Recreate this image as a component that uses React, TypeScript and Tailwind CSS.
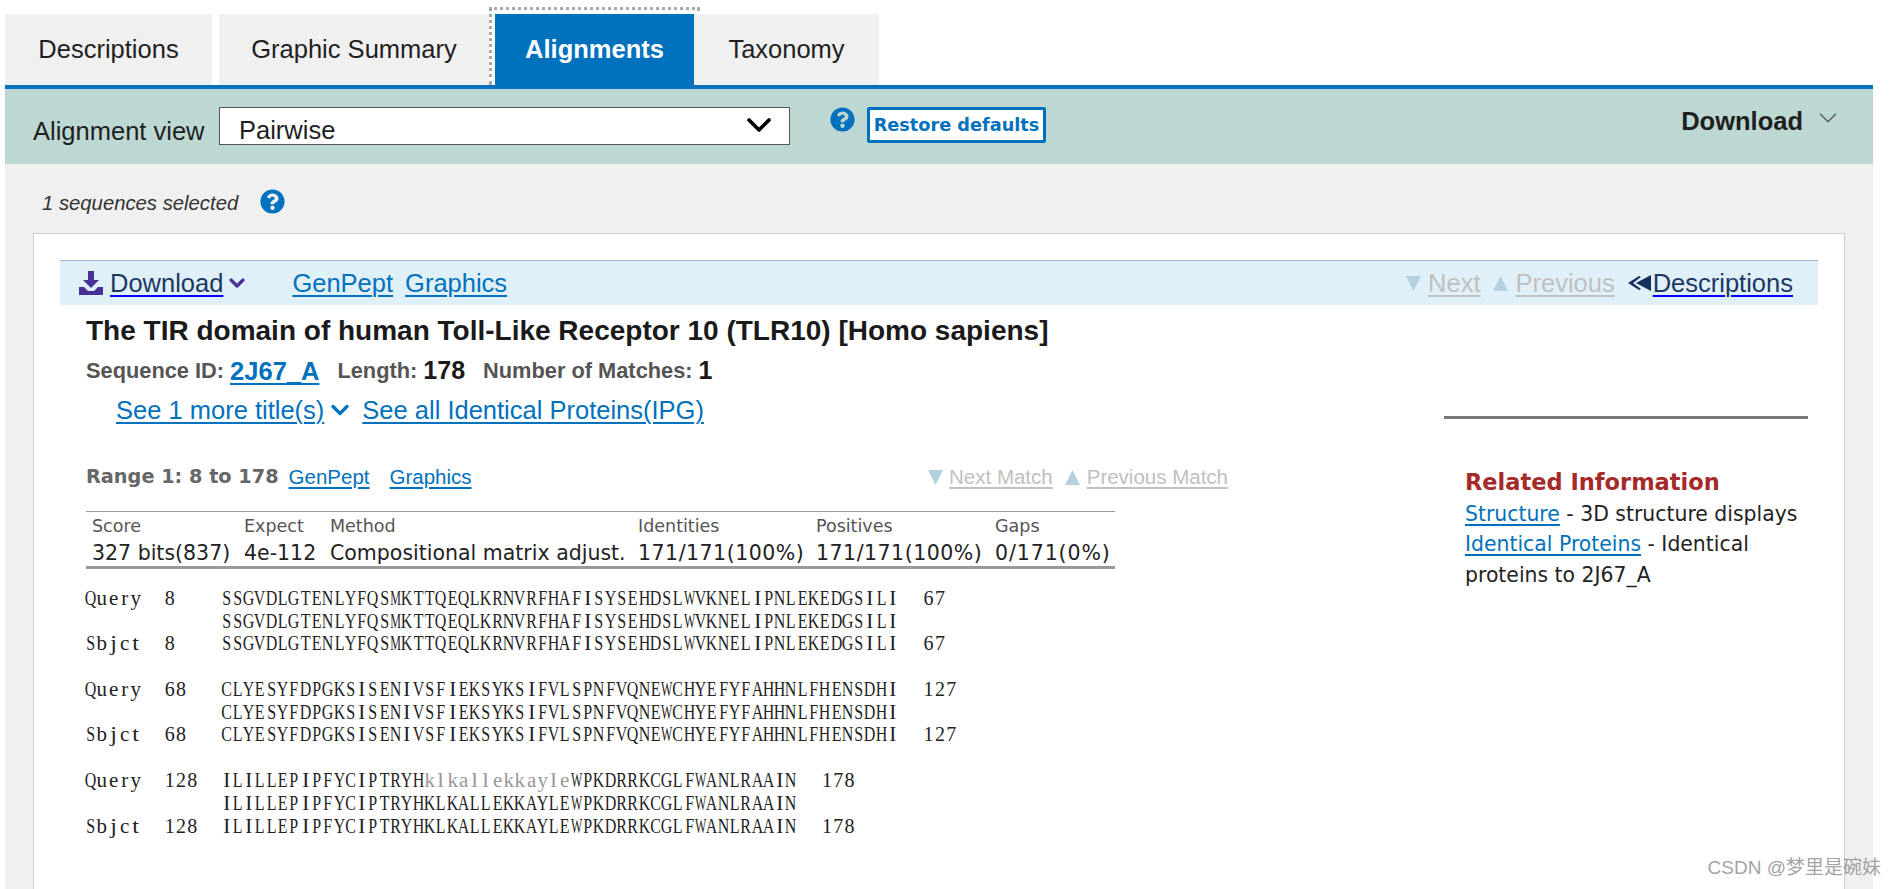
import React from 'react';
import { ChevronDown } from 'lucide-react';
import { FaQuestionCircle } from 'react-icons/fa';

const seqBlocks = [
  { start: '8', end: '67', parts: [['SSGVDLGTENLYFQSMKTTQEQLKRNVRFHAFISYSEHDSLWVKNELIPNLEKEDGSILI', false]] },
  { start: '68', end: '127', parts: [['CLYESYFDPGKSISENIVSFIEKSYKSIFVLSPNFVQNEWCHYEFYFAHHNLFHENSDHI', false]] },
  {
    start: '128',
    end: '178',
    parts: [
      ['ILILLEPIPFYCIPTRYH', false],
      ['klkallekkayle', true],
      ['WPKDRRKCGLFWANLRAAIN', false],
    ],
  },
] as { start: string; end: string; parts: [string, boolean][] }[];

// squeeze or stretch by letter so every glyph fills its cell
const cellScale = (c: string) => {
  if (c === 'M' || c === 'W') return 'scale-x-[0.6]';
  if (c === 'I' || c === 'J') return 'scale-x-[1.05]';
  if (c === 'i' || c === 'j' || c === 'l' || c === 't') return 'scale-x-[1.2]';
  if (c >= 'A' && c <= 'Z') return 'scale-x-[0.8]';
  if (c >= 'a' && c <= 'z') return 'scale-x-[1.05]';
  return 'scale-x-100';
};

// fixed pitch cell, the reference font is a narrow monospaced serif
const Mono: React.FC<{ text: string; masked?: boolean }> = ({ text, masked }) => (
  <>
    {text.split('').map((c, i) => (
      <span
        key={i}
        className={`inline-flex w-[11.3px] justify-center ${cellScale(c)} ${masked ? 'text-[#999999]' : 'text-[#222222]'}`}
      >
        {c === ' ' ? '\u00a0' : c}
      </span>
    ))}
  </>
);

const SeqRow: React.FC<{ label: string; start: string; end: string; parts: [string, boolean][]; plain?: boolean }> = ({
  label,
  start,
  end,
  parts,
  plain,
}) => (
  <div className="h-[22.7px] whitespace-nowrap">
    <Mono text={label.padEnd(7, ' ')} />
    <Mono text={start.padEnd(5, ' ')} />
    {parts.map(([t, m], i) => (
      <Mono key={i} text={plain ? t.toUpperCase() : t} masked={!plain && m} />
    ))}
    <span className="ml-[2px]">
      <Mono text={'  ' + end} />
    </span>
  </div>
);

const TriDown = () => (
  <svg width="15" height="17" viewBox="0 0 15 17" className="shrink-0">
    <polygon points="0,1 15,1 7.5,16" fill="#b5d0de" />
  </svg>
);

const TriUp = () => (
  <svg width="15" height="17" viewBox="0 0 15 17" className="shrink-0">
    <polygon points="7.5,1 15,16 0,16" fill="#b5d0de" />
  </svg>
);

const Help = () => <FaQuestionCircle className="h-[25px] w-[25px] text-[#0071bc]" />;

const linkCls = 'text-[#0071bc] underline decoration-2 underline-offset-[3px]';
const navyCls = 'text-[#1c3764] underline decoration-[#0000ff] decoration-2 underline-offset-[3px]';
const greyCls = 'text-[#c0c0c0] underline decoration-2 underline-offset-[3px]';
const verdana = "font-['DejaVu_Sans',sans-serif]";

const stats = [
  ['Score', '327 bits(837)', ''],
  ['Expect', '4e-112', ''],
  ['Method', 'Compositional matrix adjust.', ''],
  ['Identities', '171/171(100%)', 'tracking-[0.5px]'],
  ['Positives', '171/171(100%)', 'tracking-[0.5px]'],
  ['Gaps', '0/171(0%)', 'tracking-[0.9px]'],
];

export default function App() {
  return (
    <div className="relative h-[889px] overflow-hidden bg-white pl-[5px] pr-[23px] pt-[7px] font-['Liberation_Sans',Arial,sans-serif] text-[25.5px] text-[#1f1f1f]">
      {/* tabs */}
      <div className="flex h-[78px] items-end">
        <div className="flex h-[71px] w-[207px] items-center justify-center bg-[#f0f0f0]">Descriptions</div>
        <div className="ml-[7px] flex h-[71px] w-[270px] items-center justify-center bg-[#f0f0f0]">Graphic Summary</div>
        <div className="h-[78px] w-[211px] border-3 border-b-0 border-dotted border-[#aaaaaa] pl-[3px] pr-[3px] pt-[4px]">
          <div className="flex h-[71px] w-[199px] items-center justify-center bg-[#0071bc] font-bold text-white">Alignments</div>
        </div>
        <div className="relative -ml-[6px] flex h-[71px] w-[185px] items-center justify-center bg-[#f0f0f0]">Taxonomy</div>
      </div>

      {/* toolbar */}
      <div className="flex h-[79px] items-start border-t-4 border-[#0071bc] bg-[#bdd7d3] pl-[28px] pr-[30px] pt-[18px]">
        <div className="flex h-[48px] w-[186px] items-center">Alignment view</div>
        <div className="flex h-[38px] w-[571px] items-center justify-between border border-[#555555] bg-white pl-[19px] pr-[10px] pt-[9px]">
          <span>Pairwise</span>
          <ChevronDown className="h-[40px] w-[40px] -translate-y-[6px] text-black" strokeWidth={2.2} />
        </div>
        <div className="ml-[40px] mr-[12px]">
          <Help />
        </div>
        <div className={`flex h-[36px] w-[179px] items-center justify-center rounded-[2px] border-3 border-[#0071bc] bg-white text-[17.7px] font-bold text-[#0071bc] ${verdana}`}>
          Restore defaults
        </div>
        <div className="ml-auto flex h-[28px] items-center font-bold">
          Download
          <ChevronDown className="ml-[10px] h-[30px] w-[30px] -translate-y-[3px] text-[#555555]" strokeWidth={1} />
        </div>
      </div>

      {/* selected */}
      <div className="bg-[#f0f0f0] px-[28px]">
        <div className="flex h-[69px] items-start pt-[24px]">
          <span className="ml-[9px] flex h-[30px] items-center text-[20.3px] italic text-[#333333]">1 sequences selected</span>
          <span className="ml-[22px] mt-[1px]">
            <Help />
          </span>
        </div>

        {/* result card */}
        <div className="h-[700px] border border-[#cccccc] bg-white px-[26px] pt-[26px]">
          <div className="flex h-[45px] items-center justify-between border-t border-[#9db4cf] bg-[#e0f0f8] pl-[19px] pr-[25px]">
            <div className="flex items-center">
              <svg width="24" height="24" viewBox="0 0 24 24" className="shrink-0 text-[#4a2f96]" fill="currentColor">
                <path d="M9 0h6v9h5l-8 8-8-8h5z" />
                <path d="M0 16h5l4 4h6l4-4h5v8H0z" />
              </svg>
              <span className={`ml-[7px] ${navyCls}`}>Download</span>
              <ChevronDown className="ml-[2px] h-[24px] w-[24px] text-[#4a2f96]" strokeWidth={3.2} />
              <span className={`ml-[43px] ${linkCls}`}>GenPept</span>
              <span className={`ml-[12px] ${linkCls}`}>Graphics</span>
            </div>
            <div className="flex items-center">
              <TriDown />
              <span className={`ml-[7px] ${greyCls}`}>Next</span>
              <span className="ml-[13px]">
                <TriUp />
              </span>
              <span className={`ml-[7px] ${greyCls}`}>Previous</span>
              <svg width="23" height="16" viewBox="0 0 23 16" className="ml-[13px] mr-[2px] shrink-0">
                <polygon points="0,8 11,1 13,2 5,8 13,14 11,15" fill="#14305f" />
                <polygon points="8,8 23,0 23,16" fill="#14305f" />
              </svg>
              <span className={navyCls}>Descriptions</span>
            </div>
          </div>

          <div className="pl-[26px]">
            <h1 className="mt-[11px] h-[30px] text-[28px] font-bold leading-[30px] text-[#1a1a1a]">
              The TIR domain of human Toll-Like Receptor 10 (TLR10) [Homo sapiens]
            </h1>

            <div className="flex">
              <div className="min-w-0 flex-1">
                <div className="mt-[10px] flex h-[30px] items-center whitespace-nowrap text-[21.8px] font-bold text-[#555555]">
                  Sequence ID:
                  <span className={`ml-[6px] text-[25.5px] ${linkCls}`}>2J67_A</span>
                  <span className="ml-[18px]">Length:</span>
                  <span className="ml-[6px] text-[25px] text-[#1a1a1a]">178</span>
                  <span className="ml-[18px]">Number of Matches:</span>
                  <span className="ml-[6px] text-[25px] text-[#1a1a1a]">1</span>
                </div>

                <div className="mt-[9px] flex h-[30px] items-center pl-[30px] whitespace-nowrap">
                  <span className={linkCls}>See 1 more title(s)</span>
                  <ChevronDown className="ml-[2px] h-[28px] w-[28px] text-[#0071bc]" strokeWidth={2.8} />
                  <span className={`ml-[8px] ${linkCls}`}>See all Identical Proteins(IPG)</span>
                </div>

                <div className="mt-[37px] flex h-[30px] w-[1142px] items-center justify-between text-[20.5px]">
                  <div className="flex items-center">
                    <span className={`font-bold text-[#666666] ${verdana} text-[19.3px]`}>Range 1: 8 to 178</span>
                    <span className={`ml-[10px] ${linkCls}`}>GenPept</span>
                    <span className={`ml-[20px] ${linkCls}`}>Graphics</span>
                  </div>
                  <div className="flex items-center">
                    <TriDown />
                    <span className={`ml-[6px] ${greyCls}`}>Next Match</span>
                    <span className="ml-[12px]">
                      <TriUp />
                    </span>
                    <span className={`ml-[7px] ${greyCls}`}>Previous Match</span>
                  </div>
                </div>

                <div className={`mt-[19px] grid h-[58px] w-[1029px] grid-cols-[152px_86px_308px_178px_179px_120px] border-t border-b-3 border-[#999999] pl-[6px] pt-[1px] ${verdana}`}>
                  {stats.map(([head]) => (
                    <div key={head} className="h-[27px] text-[17.5px] leading-[27px] text-[#555555]">
                      {head}
                    </div>
                  ))}
                  {stats.map(([head, value, extra]) => (
                    <div key={head} className={`h-[27px] whitespace-nowrap text-[20.5px] leading-[27px] text-[#222222] ${extra}`}>
                      {value}
                    </div>
                  ))}
                </div>

                <div className="-ml-[1px] mt-[18px] font-['Liberation_Serif',serif] text-[20px] leading-[22.7px]">
                  {seqBlocks.map((b) => (
                    <div key={b.start} className="mb-[23px]">
                      <SeqRow label="Query" start={b.start} end={b.end} parts={b.parts} />
                      <SeqRow label="" start="" end="" parts={b.parts} plain />
                      <SeqRow label="Sbjct" start={b.start} end={b.end} parts={b.parts} plain />
                    </div>
                  ))}
                </div>
              </div>

              {/* related information */}
              <aside className="mr-[10px] mt-[70px] w-[364px] shrink-0">
                <div className="h-[3px] bg-[#777777]" />
                <div className={`pl-[21px] text-[20.4px] leading-[30.5px] text-[#222222] ${verdana}`}>
                  <div className="mb-[1px] mt-[48px] text-[22.5px] font-bold text-[#a52a2a]">Related Information</div>
                  <div>
                    <span className={linkCls}>Structure</span> - 3D structure displays
                  </div>
                  <div>
                    <span className={linkCls}>Identical Proteins</span> - Identical
                    <br />
                    proteins to 2J67_A
                  </div>
                </div>
              </aside>
            </div>
          </div>
        </div>
      </div>

      {/* watermark */}
      <div className="absolute bottom-[7px] right-[15px] font-['Liberation_Sans','Noto_Sans_CJK_SC',sans-serif] text-[19px] text-[#8a8a8a]/80">
        CSDN @梦里是碗妹
      </div>
    </div>
  );
}
